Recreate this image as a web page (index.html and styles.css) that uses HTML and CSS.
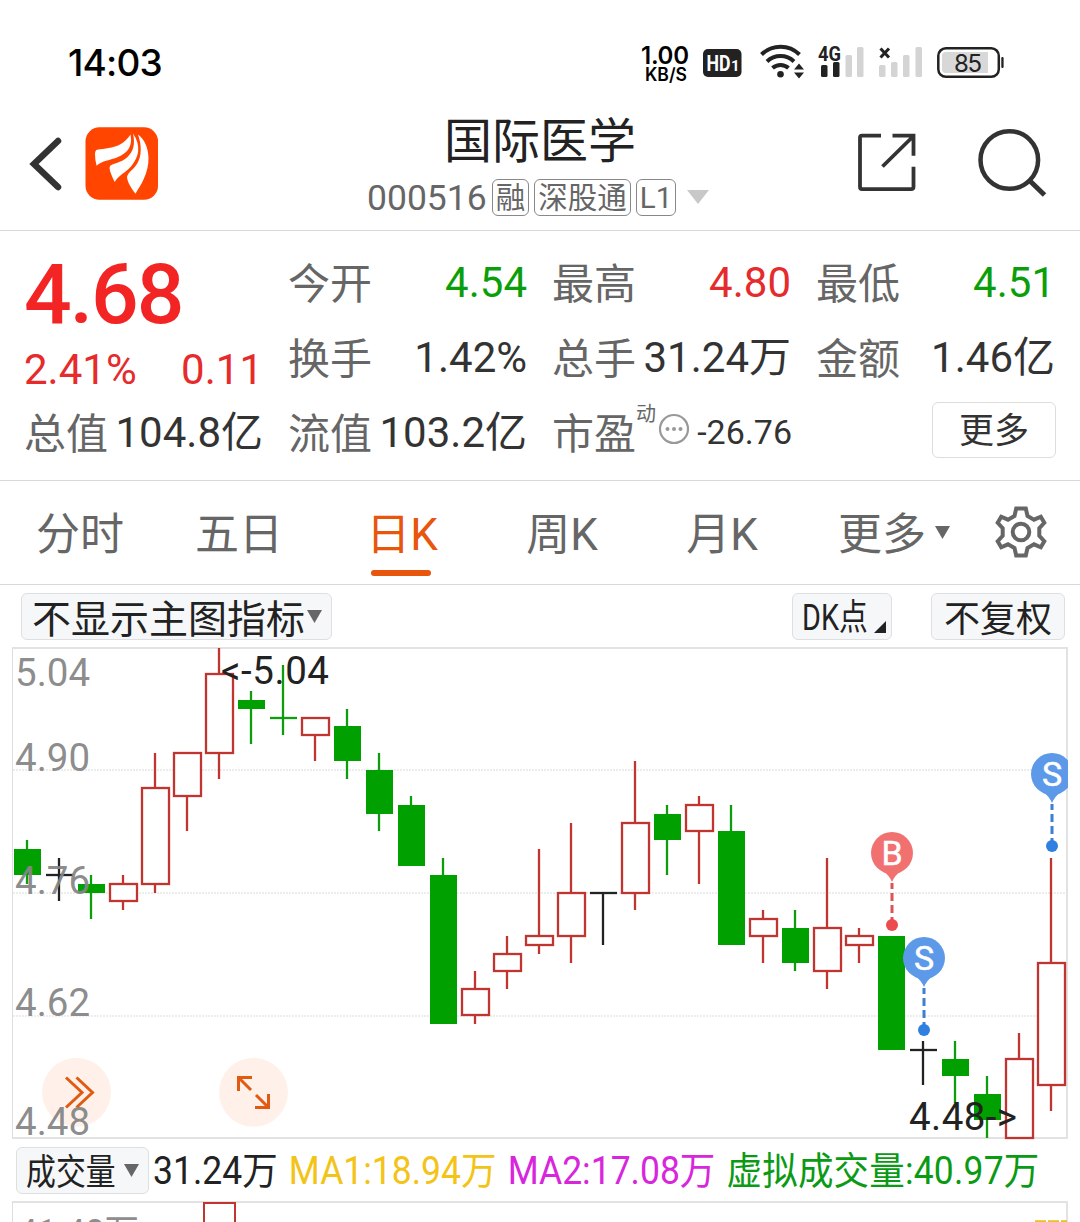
FILE: index.html
```html
<!DOCTYPE html>
<html lang="zh-CN">
<head>
    <meta charset="UTF-8">
    <meta name="viewport" content="width=device-width, initial-scale=1.0">
    <title>国际医学 000516</title>
    <link rel="stylesheet" href="styles.css">
</head>
<body>
    <div class="status-bar">
        <span class="clock">14:03</span>
        <svg class="status-icons" width="370" height="44" viewBox="638 40 370 44">
            <text class="st-speed" x="641" y="63.500" textLength="48">1.00</text>
            <text class="st-unit" x="645" y="80.500" textLength="42" lengthAdjust="spacingAndGlyphs">KB/S</text>
            <rect x="703" y="49" width="38.500" height="28" rx="5" fill="#222"/>
            <text class="st-hd" x="706.500" y="71" textLength="24" lengthAdjust="spacingAndGlyphs">HD</text>
            <text class="st-hd1" x="731" y="71">1</text>
            <g fill="none" stroke="#222" stroke-width="4">
                <path d="M761.500 54.500a27 27 0 0 1 38 0"/>
                <path d="M767 61.500a19.500 19.500 0 0 1 27 0"/>
                <path d="M772.500 68a12 12 0 0 1 16 0"/>
            </g>
            <circle cx="780.500" cy="74.300" r="3.300" fill="#222"/>
            <path d="M794 69.500l5-6 5 6zM794 72.500l5 6 5-6z" fill="#222"/>
            <text class="st-4g" x="818" y="60.500" textLength="23" lengthAdjust="spacingAndGlyphs">4G</text>
            <g fill="#222">
                <rect x="821" y="65" width="6.500" height="12" rx="1.500"/>
                <rect x="833" y="62" width="6.500" height="15" rx="1.500"/>
            </g>
            <g fill="#d4d4d4">
                <rect x="845.500" y="55" width="6.500" height="22" rx="1.500"/>
                <rect x="857" y="47" width="6.500" height="30" rx="1.500"/>
                <rect x="879" y="65" width="6.500" height="12" rx="1.500"/>
                <rect x="891" y="62" width="6.500" height="15" rx="1.500"/>
                <rect x="903" y="55" width="6.500" height="22" rx="1.500"/>
                <rect x="915.500" y="47" width="6.500" height="30" rx="1.500"/>
            </g>
            <path d="M880.500 48.500l8.500 9m0-9l-8.500 9" stroke="#222" stroke-width="3"/>
            <rect x="938.300" y="48.300" width="60.500" height="28.500" rx="7.500" fill="#fff" stroke="#222" stroke-width="2.500"/>
            <path d="M946 52h42v21h-42a4 4 0 0 1-4-4v-13a4 4 0 0 1 4-4z" fill="#d8d8d8"/>
            <rect x="1001.300" y="57" width="2.300" height="11" rx="1" fill="#222"/>
            <text class="st-battery" x="954" y="71.500" textLength="28">85</text>
        </svg>
    </div>

    <header class="header">
        <div class="header-left">
            <svg class="back" width="36" height="60" viewBox="28 133 36 60">
                <path d="M58 140L34 163l24 23" fill="none" stroke="#333" stroke-width="6.500" stroke-linecap="round" stroke-linejoin="miter"/>
            </svg>
            <svg class="logo" width="73" height="73" viewBox="85 127 73 73">
                <rect x="85.500" y="127.300" width="72.500" height="72.500" rx="14" fill="#ff4500"/>
                <g fill="#fff">
                    <path d="M130.500 134.500C127.500 139 124 142.500 119 145C113 148 105 148.500 97 149.800Q95 150.500 95 154Q95 160 96.600 165.700C102 160.500 110 160.500 118 157C127 153 133 147 130.500 134.500z"/>
                    <path d="M133 133.500C135.500 145 133 152 127 157.500C121 163 113 163 110 166Q109 168 110 171Q112 177 114.700 182C119 175 125 173 131 166.500C139 157 141.500 146 133 133.500z"/>
                    <path d="M138 134.500C142 146 141.500 156 137.500 163C134 169.500 128 172 127 177C127.500 183 132 189 135.500 193.700C138 189 141 185 143.500 179.500C147 172 148.700 165 148.500 158C148.300 148 144.500 139 138 134.500z"/>
                </g>
            </svg>
        </div>
        <div class="header-title">
            <h1>国际医学</h1>
            <div class="code-line">
                <span class="code">000516</span>
                <span class="tag">融</span>
                <span class="tag">深股通</span>
                <span class="tag">L1</span>
                <svg class="arrow" width="22" height="14" viewBox="0 0 22 14"><path d="M0 0h22L11 14z" fill="#c8c8c8"/></svg>
            </div>
        </div>
        <div class="header-right">
            <svg width="60" height="60" viewBox="857 134 60 60">
                <g fill="none" stroke="#333" stroke-width="3.800">
                    <path d="M881 136.700h-19q-2 0-2 2v49q0 2.500 2 2.500h49q2.500 0 2.500-2.500v-20"/>
                    <path d="M892.500 136.700h21v20M913 137.500L882.500 167.500"/>
                </g>
            </svg>
            <svg width="70" height="70" viewBox="977 128 70 70">
                <circle cx="1009.300" cy="160" r="28.800" fill="none" stroke="#333" stroke-width="4.500"/>
                <path d="M1029.500 180.500l15 14.500" stroke="#333" stroke-width="5"/>
            </svg>
        </div>
    </header>

    <section class="quote">
        <div class="price-box">
            <div class="price">4.68</div>
            <div class="change"><span>2.41%</span><span>0.11</span></div>
        </div>
        <div class="cell"><label>今开</label><span class="green">4.54</span></div>
        <div class="cell"><label>最高</label><span class="red">4.80</span></div>
        <div class="cell"><label>最低</label><span class="green">4.51</span></div>
        <div class="cell"><label>换手</label><span>1.42%</span></div>
        <div class="cell"><label>总手</label><span>31.24万</span></div>
        <div class="cell"><label>金额</label><span>1.46亿</span></div>
        <div class="cell"><label>总值</label><span>104.8亿</span></div>
        <div class="cell"><label>流值</label><span>103.2亿</span></div>
        <div class="cell">
            <label>市盈</label><small>动</small>
            <svg class="dots" width="32" height="32" viewBox="0 0 32 32">
                <circle cx="16" cy="16" r="14" fill="none" stroke="#999" stroke-width="2.200"/>
                <g fill="#999"><circle cx="9.500" cy="16" r="2"/><circle cx="16" cy="16" r="2"/><circle cx="22.500" cy="16" r="2"/></g>
            </svg>
            <span class="pe">-26.76</span>
        </div>
        <div class="cell more-cell"><button class="more">更多</button></div>
    </section>

    <nav class="tabs">
        <a>分时</a>
        <a>五日</a>
        <a class="active">日K</a>
        <a>周K</a>
        <a>月K</a>
        <a>更多<svg class="tab-arrow" width="15" height="13" viewBox="0 0 15 13"><path d="M0 0h15L7.500 13z" fill="#666"/></svg></a>
        <a>
            <svg class="gear" width="54" height="54" viewBox="-27 -27 54 54">
                <g fill="none" stroke="#666" stroke-width="4">
                    <path d="M-4.800-23.500H4.800L6.500-16L13-12.300L19.800-15.300L23.300-9.200L18.300-3.800V3.800L23.300 9.200L19.800 15.300L13 12.300L6.500 16L4.800 23.500H-4.800L-6.500 16L-13 12.300L-19.800 15.300L-23.300 9.200L-18.300 3.800V-3.800L-23.300-9.200L-19.800-15.300L-13-12.300L-6.500-16z"/>
                    <circle r="8.300"/>
                </g>
            </svg>
        </a>
    </nav>

    <div class="toolbar">
        <button class="tool tool-main"><span>不显示主图指标</span><svg width="15" height="13" viewBox="0 0 15 13"><path d="M0 0h15L7.500 13z" fill="#666"/></svg></button>
        <button class="tool tool-dk"><span>DK点</span><svg width="12" height="12" viewBox="0 0 12 12"><path d="M12 0v12H0z" fill="#222"/></svg></button>
        <button class="tool tool-fq"><span>不复权</span></button>
    </div>

    <svg class="chart" width="1080" height="494" viewBox="0 646 1080 494">
        <defs>
            <clipPath id="plot"><rect x="0" y="646" width="1068" height="494"/></clipPath>
        </defs>
        <g class="grid">
            <path d="M13 770H1067M13 893H1067M13 1016H1067"/>
        </g>
        <path class="frame" d="M12 648H1067V1138H12"/>
        <path class="frame-left" d="M12.500 648V1138"/>
        <g id="candles"></g>
        <g id="marks" clip-path="url(#plot)"></g>
        <g class="round-btn">
            <circle cx="76.500" cy="1092.300" r="34.500"/>
            <path d="M66 1077.500l16 15-16 15M76.500 1077.500l16 15-16 15"/>
            <circle cx="253.500" cy="1092.300" r="34.500"/>
            <path d="M252 1077.500h-13.500v13.500M239 1078l12 12M255 1107.500h13.500v-13.500M268 1107l-12-12"/>
        </g>
        <g class="axis">
            <text x="15" y="686">5.04</text>
            <text x="15" y="771">4.90</text>
            <text x="15" y="894">4.76</text>
            <text x="15" y="1016">4.62</text>
            <text x="15" y="1135">4.48</text>
        </g>
        <g class="extreme">
            <text x="221" y="684" textLength="108">&lt;-5.04</text>
            <text x="909" y="1130" textLength="108">4.48-&gt;</text>
        </g>
    </svg>

    <div class="volume-bar">
        <button class="tool tool-vol"><span>成交量</span><svg width="15" height="13" viewBox="0 0 15 13"><path d="M0 0h15L7.500 13z" fill="#666"/></svg></button>
        <div class="volume-values">
            <span>31.24万</span>
            <span class="ma1">MA1:18.94万</span>
            <span class="ma2">MA2:17.08万</span>
            <span class="virtual">虚拟成交量:40.97万</span>
        </div>
    </div>

    <svg class="volume-chart" width="1080" height="21" viewBox="0 1201 1080 21">
        <path class="frame" d="M12 1202H1067V1240"/>
        <path class="frame-left" d="M12.500 1202V1240"/>
        <rect x="204" y="1203" width="31" height="60" fill="#fff" stroke="#c13531" stroke-width="2"/>
        <path d="M1035 1221.300h32" stroke="#eac01f" stroke-width="2" stroke-dasharray="11 2"/>
        <text class="vol-label" x="18" y="1246.500" textLength="121" lengthAdjust="spacingAndGlyphs">41.48万</text>
    </svg>

    <script src="chart.js"></script>
</body>
</html>
```

FILE: styles.css
```css
* {
    box-sizing: border-box;
}

body {
    margin: 0;
    width: 1080px;
    height: 1222px;
    overflow: hidden;
    background-color: #fff;
    color: #333;
    font-family: Roboto, "Noto Sans CJK SC", sans-serif;
}

svg {
    display: block;
    flex: none;
}

button {
    margin: 0;
    font-family: inherit;
    white-space: nowrap;
}

/* status bar */
.status-bar {
    display: flex;
    justify-content: space-between;
    height: 100px;
    padding: 40px 72px 0 68px;
}

.clock {
    font: 500 37px/46px Inter, sans-serif;
    letter-spacing: -0.8px;
    color: #000;
}

.st-speed {
    font: 600 24px Inter, sans-serif;
}

.st-unit {
    font: 600 18px Inter, sans-serif;
}

.st-hd {
    font: 700 22px Roboto, sans-serif;
    fill: #fff;
}

.st-hd1 {
    font: 700 15px Roboto, sans-serif;
    fill: #fff;
}

.st-4g {
    font: 700 21px Roboto, sans-serif;
    fill: #222;
}

.st-battery {
    font: 400 24px Inter, sans-serif;
    fill: #222;
}

/* header */
.header {
    display: grid;
    grid-template-columns: 340px 400px 340px;
    height: 131px;
    border-bottom: 1px solid #d9d9d9;
}

.header-left {
    display: flex;
    align-items: center;
    gap: 21px;
    padding-left: 28px;
    height: 127px;
}

.header-title h1 {
    margin: 12px 0 0;
    font-size: 48px;
    font-weight: 400;
    line-height: 60px;
    color: #222;
    text-align: center;
}

.code-line {
    display: flex;
    align-items: center;
    gap: 5px;
    height: 38px;
    padding-left: 27px;
    margin-top: 6px;
    color: #666;
}

.code {
    padding-top: 2px;
    font-size: 35.5px;
    line-height: 38px;
}

.tag {
    height: 37px;
    padding: 0 3px;
    border: 1px solid #888;
    border-radius: 6px;
    font-size: 29.5px;
    line-height: 37px;
}

.arrow {
    margin-left: 6px;
}

.header-right {
    display: flex;
    align-items: center;
    justify-content: flex-end;
    gap: 60px;
    height: 126px;
    padding-right: 33px;
}

/* quote */
.quote {
    display: grid;
    grid-template-columns: repeat(4, 238px);
    grid-template-rows: repeat(3, 75px);
    column-gap: 26px;
    height: 250px;
    padding: 14px 25px 0;
    border-bottom: 1px solid #d9d9d9;
}

.price-box {
    grid-row: span 2;
    color: #f22424;
}

.price {
    height: 88px;
    margin-left: -1px;
    font-size: 84px;
    font-weight: 500;
    line-height: 100px;
    letter-spacing: -2px;
}

.change {
    display: flex;
    justify-content: space-between;
    margin-left: -1px;
    font-size: 42px;
    line-height: 73px;
    color: #e52b2b;
}

.cell {
    display: flex;
    justify-content: space-between;
    font-size: 42px;
    line-height: 75px;
    white-space: nowrap;
}

.cell label {
    margin-left: -1px;
    padding-top: 2px;
    color: #666;
}

.cell small {
    margin-right: -1px;
    margin-left: -4px;
    font-size: 20px;
    line-height: 38px;
    color: #666;
}

.cell .pe {
    margin-right: -1px;
    font-size: 34px;
}

.dots {
    margin: 18px 3px 0 -1px;
}

.red {
    color: #e52b2b;
}

.green {
    color: #0a9f0a;
}

.more-cell {
    justify-content: flex-end;
}

.more {
    width: 124px;
    height: 56px;
    margin: 7px -1px 0 0;
    padding: 4px 0 0;
    background-color: #fff;
    border: 1px solid #ddd;
    border-radius: 6px;
    font-size: 35px;
    line-height: 50px;
    color: #333;
}

/* tabs */
.tabs {
    display: grid;
    grid-template-columns: 160px 158px 168px 152px 168px 176px 78px;
    height: 104px;
    border-bottom: 1px solid #d9d9d9;
}

.tabs a {
    display: flex;
    align-items: center;
    justify-content: center;
    position: relative;
    height: 103px;
    font-size: 44px;
    line-height: 97px;
    padding-top: 6px;
    color: #666;
}

.tabs .active {
    color: #e8550c;
}

.tabs .active::after {
    content: "";
    position: absolute;
    left: 53px;
    bottom: 8px;
    width: 60px;
    height: 6px;
    border-radius: 3px;
    background-color: #e8550c;
}

.tab-arrow {
    margin: -6px 0 0 9px;
}

.gear {
    margin-top: -7px;
}

/* toolbar */
.toolbar {
    display: flex;
    height: 61px;
    padding: 8px 15px 0 21px;
}

.tool {
    display: flex;
    align-items: center;
    height: 47px;
    padding: 0;
    border: 1px solid #dddfe2;
    border-radius: 6px;
    background-color: #f6f7f9;
    color: #222;
    line-height: 45px;
}

.tool-main {
    width: 311px;
    padding-left: 10px;
    font-size: 39px;
}

.tool-main span,
.tool-fq span {
    padding-top: 7px;
}

.tool-main svg {
    margin-left: 2px;
}

.tool-dk {
    width: 100px;
    margin-left: auto;
    padding-left: 9px;
    font-size: 36px;
}

.tool-dk span {
    width: 68px;
    padding-top: 3px;
    transform: scaleX(0.8);
    transform-origin: left;
}

.tool-dk svg {
    margin: 21px 0 0 4px;
}

.tool-fq {
    width: 134px;
    margin-left: 39px;
    justify-content: center;
    font-size: 36px;
}

/* k-line chart */
.grid path {
    stroke: #e8e8e8;
    stroke-width: 1.5;
    stroke-dasharray: 2 1;
}

.frame {
    fill: none;
    stroke: #e2e2e2;
    stroke-width: 2;
}

.frame-left {
    stroke: #dedede;
    stroke-width: 1;
}

.up {
    fill: #fff;
    stroke: #c13531;
    stroke-width: 2.3;
}

.down {
    fill: #00a000;
}

.wick-up {
    stroke: #c13531;
    stroke-width: 2.3;
}

.wick-down {
    stroke: #0f9d0f;
    stroke-width: 2.3;
}

.wick-flat {
    stroke: #222;
    stroke-width: 2.3;
}

.axis text,
.vol-label {
    font-size: 38.5px;
    fill: #868686;
    fill-opacity: 0.95;
}

.extreme text {
    font-size: 38.5px;
    fill: #222;
}

.mark text {
    font-size: 34px;
    stroke: #fff;
    stroke-width: 0.5;
    fill: #fff;
    text-anchor: middle;
}

.round-btn circle {
    fill: #fff1ea;
}

.round-btn path {
    fill: none;
    stroke: #e05a12;
    stroke-width: 3;
}

/* volume */
.volume-bar {
    display: flex;
    align-items: center;
    height: 61px;
    padding-left: 16px;
}

.tool-vol {
    flex: none;
    width: 133px;
    padding-left: 9px;
    font-size: 36px;
}

.tool-vol span {
    width: 98px;
    padding-top: 5px;
    transform: scaleX(0.83);
    transform-origin: left;
}

.volume-values {
    display: flex;
    gap: 12px;
    margin-left: 4px;
    padding-top: 2px;
    font-size: 38px;
    line-height: 61px;
    white-space: nowrap;
    color: #222;
    transform: scaleX(0.934);
    transform-origin: left;
}

.ma1 {
    color: #f3c317;
}

.ma2 {
    color: #d726dc;
}

.virtual {
    color: #0a9a14;
    letter-spacing: 0.2px;
}
```

FILE: chart.js
```js
// [open/close top, open/close bottom, high, low, type] in cents
const candles = [
    [481, 478, 482, 477, 'down'],
    [478, 478, 480, 475, 'flat'],
    [477, 476, 478, 473, 'down'],
    [477, 475, 478, 474, 'up'],
    [488, 477, 492, 476, 'up'],
    [492, 487, 492, 483, 'up'],
    [501, 492, 504, 489, 'up'],
    [498, 497, 499, 493, 'down'],
    [496, 496, 502, 494, 'down'],
    [496, 494, 496, 491, 'up'],
    [495, 491, 497, 489, 'down'],
    [490, 485, 492, 483, 'down'],
    [486, 479, 487, 479, 'down'],
    [478, 461, 480, 461, 'down'],
    [465, 462, 467, 461, 'up'],
    [469, 467, 471, 465, 'up'],
    [471, 470, 481, 469, 'up'],
    [476, 471, 484, 468, 'up'],
    [476, 476, 476, 470, 'flat'],
    [484, 476, 491, 474, 'up'],
    [485, 482, 486, 478, 'down'],
    [486, 483, 487, 477, 'up'],
    [483, 470, 486, 470, 'down'],
    [473, 471, 474, 468, 'up'],
    [472, 468, 474, 467, 'down'],
    [472, 467, 480, 465, 'up'],
    [471, 470, 472, 468, 'up'],
    [471, 458, 471, 458, 'down'],
    [458, 458, 459, 454, 'flat'],
    [457, 455, 459, 452, 'down'],
    [453, 450, 455, 448, 'down'],
    [457, 448, 460, 448, 'up'],
    [468, 454, 480, 451, 'up']
];

const marks = [
    { x: 892, y: 853, text: 'B', fill: '#f17171', line: '#dc5555', dot: '#ec4b4f' },
    { x: 924, y: 958, text: 'S', fill: '#5c99e8', line: '#3f7fd2', dot: '#3080e2' },
    { x: 1052, y: 774, text: 'S', fill: '#5c99e8', line: '#3f7fd2', dot: '#3080e2' }
];

function priceY(cents) {
    return Math.floor(648 + (504 - cents) * 8.75);
}

let html = '';
candles.forEach(function([top, bottom, high, low, type], i) {
    const x = 27 + 32 * i;
    html += `<path class="wick-${type}" d="M${x} ${priceY(high)}V${priceY(low)}"/>`;
    if (top === bottom) {
        html += `<path class="wick-${type}" d="M${x - 13} ${priceY(top)}h27"/>`;
    } else {
        html += `<rect class="${type}" x="${x - 13}" y="${priceY(top)}" width="27" height="${priceY(bottom) - priceY(top)}"/>`;
    }
});
document.getElementById('candles').innerHTML = html;

document.getElementById('marks').innerHTML = marks.map(function(m) {
    return `<g class="mark" transform="translate(${m.x} ${m.y})">
        <circle r="21" fill="${m.fill}"/>
        <path d="M-9 18Q-3 22 0 29Q3 22 9 18z" fill="${m.fill}"/>
        <path d="M0 30V68" stroke="${m.line}" stroke-width="3" stroke-dasharray="8 4" stroke-dashoffset="2"/>
        <circle cy="72" r="6" fill="${m.dot}"/>
        <text y="12">${m.text}</text>
    </g>`;
}).join('');
```
